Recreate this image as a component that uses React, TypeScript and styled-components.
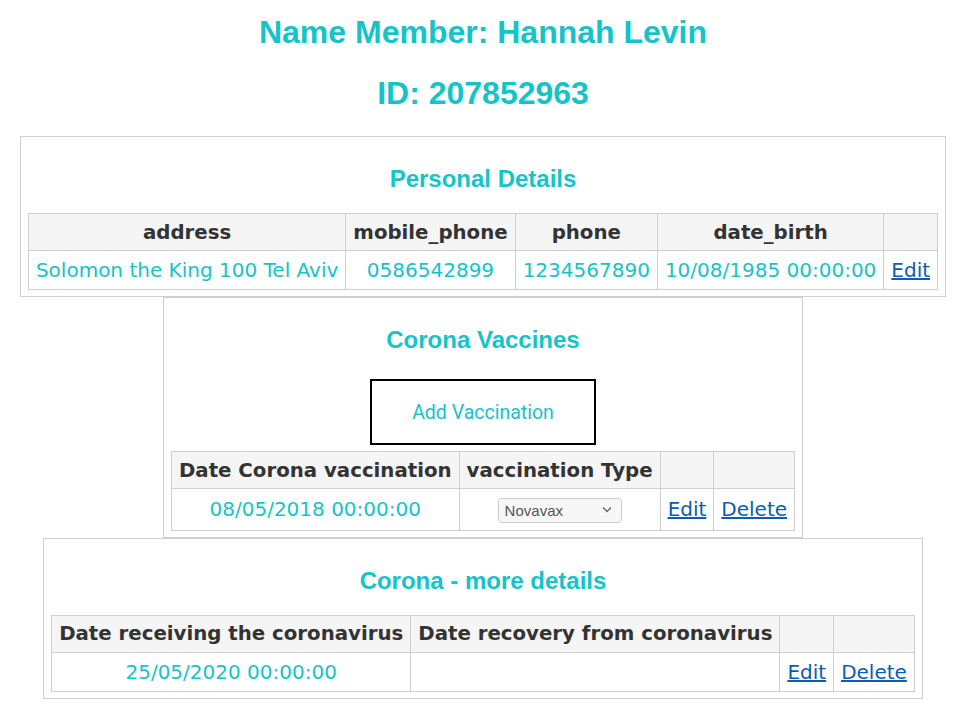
import React from "react";
import styled, { createGlobalStyle } from "styled-components";

const TEAL = "#14c4c8";
const LINE = "#cfcfcf";

const GlobalStyle = createGlobalStyle`
  body {
    margin: 0 0 0 8px;
    padding-top: 14px;
    background: #ffffff;
    font-family: "DejaVu Sans", Verdana, sans-serif;
  }
`;

const Page = styled.div`
  display: flex;
  flex-direction: column;
  align-items: center;
`;

const Title = styled.h1`
  margin: 0 0 24px;
  font-family: "Liberation Sans", Arial, sans-serif;
  font-size: 32px;
  font-weight: 700;
  color: ${TEAL};
`;

const Panel = styled.section`
  display: flex;
  flex-direction: column;
  align-items: center;
  border: 1px solid ${LINE};
  padding: 8px 7px 6px;
`;

const PanelTitle = styled.h2`
  margin: 20px 0;
  font-family: "Liberation Sans", Arial, sans-serif;
  font-size: 24px;
  font-weight: 700;
  color: ${TEAL};
`;

const AddButton = styled.button`
  width: 226px;
  height: 66px;
  margin: 5px 0 6px;
  background: #ffffff;
  border: 2px solid #000000;
  font-family: Roboto, "Open Sans", sans-serif;
  font-size: 19.5px;
  color: ${TEAL};
  cursor: pointer;
`;

const Table = styled.table`
  border-collapse: collapse;
  border: 1px solid ${LINE};
  font-size: 20px;
`;

const Th = styled.th`
  padding: 6.5px 7px;
  border: 1px solid ${LINE};
  background: #f5f5f5;
  color: #333333;
  font-size: 19.75px;
  font-weight: 700;
  white-space: nowrap;
`;

const Td = styled.td`
  padding: 7px;
  border: 1px solid ${LINE};
  color: ${TEAL};
  text-align: center;
  white-space: nowrap;
`;

const ActionLink = styled.a`
  color: #0c5cb4;
  text-decoration: underline;
  cursor: pointer;
`;

const SelectWrap = styled.span`
  position: relative;
  display: inline-block;
  vertical-align: middle;
`;

const TypeSelect = styled.select`
  appearance: none;
  width: 124px;
  height: 25px;
  padding: 0 24px 0 6px;
  border: 1px solid #cccccc;
  border-radius: 4px;
  background: #f7f7f7;
  font-family: "Liberation Sans", Arial, sans-serif;
  font-size: 15px;
  color: #555555;
`;

const Chevron = styled.svg`
  position: absolute;
  right: 10px;
  top: 9px;
  pointer-events: none;
`;

const vaccineTypes = ["Novavax", "Pfizer", "Moderna", "AstraZeneca"];

const App: React.FC = () => {
  return (
    <Page>
      <GlobalStyle />
      <Title>Name Member: Hannah Levin</Title>
      <Title>ID: 207852963</Title>

      <Panel>
        <PanelTitle>Personal Details</PanelTitle>
        <Table>
          <thead>
            <tr>
              <Th>address</Th>
              <Th>mobile_phone</Th>
              <Th>phone</Th>
              <Th>date_birth</Th>
              <Th />
            </tr>
          </thead>
          <tbody>
            <tr>
              <Td>Solomon the King 100 Tel Aviv</Td>
              <Td>0586542899</Td>
              <Td>1234567890</Td>
              <Td>10/08/1985 00:00:00</Td>
              <Td>
                <ActionLink>Edit</ActionLink>
              </Td>
            </tr>
          </tbody>
        </Table>
      </Panel>

      <Panel>
        <PanelTitle>Corona Vaccines</PanelTitle>
        <AddButton>Add Vaccination</AddButton>
        <Table>
          <thead>
            <tr>
              <Th>Date Corona vaccination</Th>
              <Th>vaccination Type</Th>
              <Th />
              <Th />
            </tr>
          </thead>
          <tbody>
            <tr>
              <Td>08/05/2018 00:00:00</Td>
              <Td>
                <SelectWrap>
                  <TypeSelect defaultValue="Novavax">
                    {vaccineTypes.map((t) => (
                      <option key={t}>{t}</option>
                    ))}
                  </TypeSelect>
                  <Chevron width="10" height="7" viewBox="0 0 10 7">
                    <path d="M1 1.5 L5 5.5 L9 1.5" fill="none" stroke="#666" strokeWidth="1.3" />
                  </Chevron>
                </SelectWrap>
              </Td>
              <Td>
                <ActionLink>Edit</ActionLink>
              </Td>
              <Td>
                <ActionLink>Delete</ActionLink>
              </Td>
            </tr>
          </tbody>
        </Table>
      </Panel>

      <Panel>
        <PanelTitle>Corona - more details</PanelTitle>
        <Table>
          <thead>
            <tr>
              <Th>Date receiving the coronavirus</Th>
              <Th>Date recovery from coronavirus</Th>
              <Th />
              <Th />
            </tr>
          </thead>
          <tbody>
            <tr>
              <Td>25/05/2020 00:00:00</Td>
              <Td />
              <Td>
                <ActionLink>Edit</ActionLink>
              </Td>
              <Td>
                <ActionLink>Delete</ActionLink>
              </Td>
            </tr>
          </tbody>
        </Table>
      </Panel>
    </Page>
  );
};

export default App;
